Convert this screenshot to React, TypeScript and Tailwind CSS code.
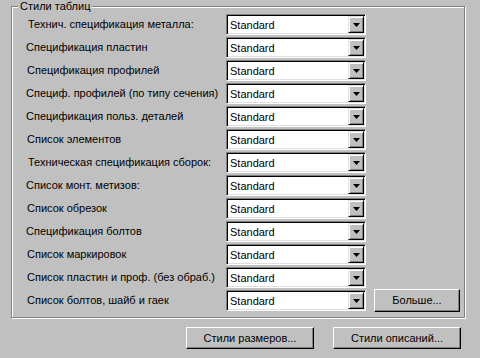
const rows = [
  { label: "Технич. спецификация металла:", pad: "pl-[16px]" },
  { label: "Спецификация пластин", pad: "pl-[14px]" },
  { label: "Спецификация профилей", pad: "pl-[15px]" },
  { label: "Специф. профилей (по типу сечения)", pad: "pl-[14px]" },
  { label: "Спецификация польз. деталей", pad: "pl-[14px]" },
  { label: "Список элементов", pad: "pl-[15px]" },
  { label: "Техническая спецификация сборок:", pad: "pl-[16px]" },
  { label: "Список монт. метизов:", pad: "pl-[14px]" },
  { label: "Список обрезок", pad: "pl-[15px]" },
  { label: "Спецификация болтов", pad: "pl-[14px]" },
  { label: "Список маркировок", pad: "pl-[15px]" },
  { label: "Список пластин и проф. (без обраб.)", pad: "pl-[15px]" },
  { label: "Список болтов, шайб и гаек", pad: "pl-[15px]" },
];

function Combo() {
  return (
    <div className="flex h-[21px] w-[140px] items-stretch border border-t-[#808080] border-l-[#808080] border-r-white border-b-white bg-white shadow-[inset_1px_1px_0_#000,inset_-1px_-1px_0_#dfdfdf]">
      <div className="flex flex-1 items-center pl-[3px] pt-px text-[11px] text-black">Standard</div>
      <div className="my-[1px] mr-[1px] flex w-[16px] items-center justify-center border border-t-[#dfdfdf] border-l-[#dfdfdf] border-r-black border-b-black bg-[#c0c0c0] shadow-[inset_1px_1px_0_#fff,inset_-1px_-1px_0_#808080]">
        <svg width="7" height="4" viewBox="0 0 7 4" className="mt-px">
          <path d="M0 0h7L3.5 4z" fill="#000" />
        </svg>
      </div>
    </div>
  );
}

function Button({ label, className = "" }: { label: string; className?: string }) {
  return (
    <button className={`${className} flex items-center justify-center border border-t-white border-l-white border-r-black border-b-black bg-[#c0c0c0] text-[11px] text-black shadow-[inset_-1px_-1px_0_#808080]`}>
      {label}
    </button>
  );
}

export default function App() {
  return (
    <div className="h-[358px] w-[480px] overflow-hidden bg-[#c0c0c0] font-['Liberation_Sans',Arial,sans-serif]">
      <div className="relative ml-[11px] mt-[6px] h-[312px] w-[454px] border border-[#808080] shadow-[inset_1px_1px_0_#fff,1px_1px_0_#fff]">
        <span className="absolute left-[6px] top-[-8px] bg-[#c0c0c0] px-[2px] text-[11px] leading-[14px] text-black">
          Стили таблиц
        </span>
        <div className="flex flex-col gap-[2px] pt-[7px]">
          {rows.map((r, i) => (
            <div key={i} className="flex h-[21px] items-center">
              <div className={`${r.pad} w-[214px] text-[11px] text-black`}>{r.label}</div>
              <Combo />
              {i === rows.length - 1 && <Button label="Больше..." className="ml-[8px] h-[23px] w-[86px]" />}
            </div>
          ))}
        </div>
      </div>
      <div className="mt-[9px] flex gap-[19px] pl-[186px]">
        <Button label="Стили размеров..." className="h-[22px] w-[128px]" />
        <Button label="Стили описаний..." className="h-[22px] w-[128px]" />
      </div>
    </div>
  );
}
